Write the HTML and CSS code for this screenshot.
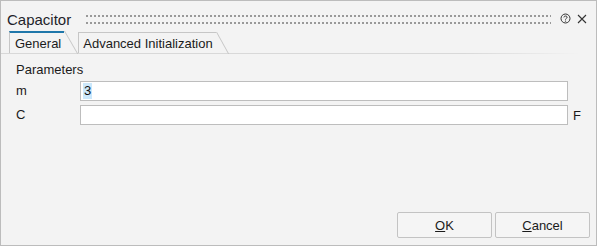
FILE: index.html
```html
<!DOCTYPE html>
<html lang="en">
<head>
  <meta charset="UTF-8">
  <title>Capacitor</title>
  <link rel="stylesheet" href="styles.css">
</head>
<body>

  <div class="window">

    <div class="titlebar">
      <span class="title">Capacitor</span>
      <div class="grip"></div>
      <svg class="icon" width="11" height="11" viewBox="0 0 11 11">
        <circle cx="5.5" cy="5.5" r="4.5" fill="none" stroke="#333" stroke-width="1"/>
        <path d="M3.9 4.4 C3.9 2.6 7.1 2.6 7.1 4.3 C7.1 5.4 5.5 5.4 5.5 6.6" fill="none" stroke="#333" stroke-width="1"/>
        <circle cx="5.5" cy="8.1" r="0.7" fill="#333"/>
      </svg>
      <svg class="icon close" width="10" height="10" viewBox="0 0 10 10">
        <path d="M1 1 L9 9 M9 1 L1 9" stroke="#333" stroke-width="1.1"/>
      </svg>
    </div>

    <div class="tabbar">
      <div class="tab active">General</div>
      <div class="tab">Advanced Initialization</div>
    </div>

    <div class="panel">
      <div class="group">Parameters</div>
      <div class="rows">
        <span class="label">m</span>
        <div class="field"><span class="sel">3</span></div>
        <span class="unit"></span>

        <span class="label">C</span>
        <div class="field"></div>
        <span class="unit">F</span>
      </div>
    </div>

    <div class="buttons">
      <button><u>O</u>K</button>
      <button><u>C</u>ancel</button>
    </div>

  </div>

</body>
</html>
```

FILE: styles.css
```css
body {
  margin: 0;
  font-family: "Liberation Sans", Arial, sans-serif;
  font-size: 13px;
  color: #1b1b1b;
}

.window {
  width: 597px;
  height: 246px;
  box-sizing: border-box;
  border: 1px solid #bcbcbc;
  background-color: #f3f3f3;
  display: flex;
  flex-direction: column;
}

/* barra de titulo */
.titlebar {
  height: 20px;
  margin-top: 9px;
  padding: 0 9px 0 6px;
  display: flex;
  align-items: center;
}

.title {
  font-size: 15px;
  line-height: 20px;
  color: #1f1f2a;
}

.grip {
  flex: 1;
  height: 9px;
  margin: 0 9px 2px 15px;
  background:
    linear-gradient(90deg, #999 50%, transparent 50%) 0 0 / 4px 2px repeat-x,
    linear-gradient(90deg, #999 50%, transparent 50%) 0 7px / 4px 2px repeat-x;
}

.icon {
  display: block;
  margin-bottom: 3px;
}

.close {
  margin-left: 6px;
}

/* abas */
.tabbar {
  margin: 1px 17px 0 0;
  padding-left: 8px;
  display: flex;
  align-items: flex-start;
  border-bottom: 1px solid #dcdcdc;
  border-image: linear-gradient(to right, #d8d8d8 80%, rgba(220, 220, 220, 0)) 1;
}

.tab {
  position: relative;
  height: 20px;
  line-height: 21px;
  margin-top: 1px;
  margin-left: 14px;
  padding: 0 3px 0 4px;
  border-left: 1px solid #c6c6c6;
  border-top: 1px solid #c6c6c6;
}

.tab::after {
  content: "";
  position: absolute;
  left: 100%;
  top: -1px;
  width: 1px;
  height: 22px;
  background-color: #c6c6c6;
  transform: skewX(29deg);
  transform-origin: top left;
}

.tab.active {
  margin-top: 0;
  margin-left: 0;
  padding: 0 3px 0 5px;
  border-top: 2px solid #1f77aa;
}

.tab.active::after {
  top: -2px;
  height: 23px;
  transform: skewX(30deg);
}

/* parametros */
.panel {
  padding: 8px 0 0 15px;
}

.group {
  line-height: 16px;
  margin-bottom: 3px;
}

.rows {
  display: grid;
  grid-template-columns: 64px 488px auto;
  row-gap: 4px;
  align-items: center;
}

.label {
  line-height: 20px;
}

.field {
  height: 20px;
  box-sizing: border-box;
  border: 1px solid #bdbdbd;
  background-color: white;
  padding: 1px 0 0 2px;
  line-height: 16px;
}

.sel {
  display: inline-block;
  background-color: #cce8fb;
  padding: 0 1px;
  color: #111;
}

.unit {
  padding-left: 5px;
}

/* botoes */
.buttons {
  margin-top: auto;
  padding: 0 6px 7px 0;
  display: flex;
  justify-content: flex-end;
  gap: 3px;
}

.buttons button {
  width: 95px;
  height: 26px;
  font-family: "Liberation Sans", Arial, sans-serif;
  font-size: 13px;
  color: #1b1b1b;
  background-color: #f5f5f5;
  border: 1px solid #c3c3c3;
  border-radius: 2px;
  padding: 0;
}
```
